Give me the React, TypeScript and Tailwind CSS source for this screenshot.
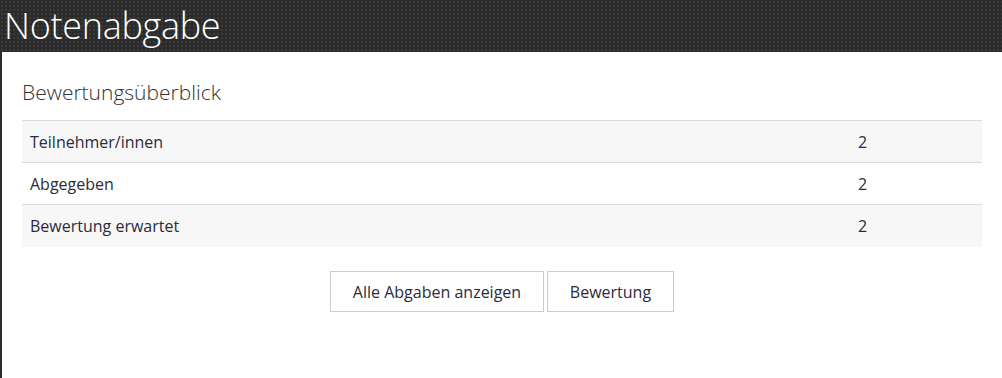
const rows = [
  { label: "Teilnehmer/innen", value: "2" },
  { label: "Abgegeben", value: "2" },
  { label: "Bewertung erwartet", value: "2" },
];

export default function App() {
  return (
    <div className="min-h-[378px] bg-[#2b2b2b] font-['Open_Sans',sans-serif] text-[#2b2b3c]">
      <header className="h-[52px] bg-[#2b2b2b] bg-[radial-gradient(#3b3b3b_1px,transparent_1px)] bg-[size:4px_4px] px-[4px]">
        <h1 className="text-[36px] leading-[52px] font-light text-white tracking-[-0.3px]">Notenabgabe</h1>
      </header>
      <main className="ml-[2px] min-h-[326px] bg-white px-[20px] pt-[26px]">
        <h2 className="text-[21px] font-light leading-[28px] text-[#333]">Bewertungsüberblick</h2>
        <div className="mt-[14px] border-t border-[#dddddd]">
          {rows.map((row, idx) => (
            <div
              key={row.label}
              className={`flex h-[42px] items-center text-[16px] ${idx % 2 === 0 ? "bg-[#f7f7f7]" : "bg-white"} ${idx < rows.length - 1 ? "border-b border-[#dddddd]" : ""}`}
            >
              <span className="w-[836px] pl-[8px]">{row.label}</span>
              <span>{row.value}</span>
            </div>
          ))}
        </div>
        <div className="mt-[24px] flex justify-center gap-[3px]">
          <button className="h-[41px] w-[214px] border border-[#cccccc] bg-white text-[16px]">Alle Abgaben anzeigen</button>
          <button className="h-[41px] w-[127px] border border-[#cccccc] bg-white text-[16px]">Bewertung</button>
        </div>
      </main>
    </div>
  );
}
